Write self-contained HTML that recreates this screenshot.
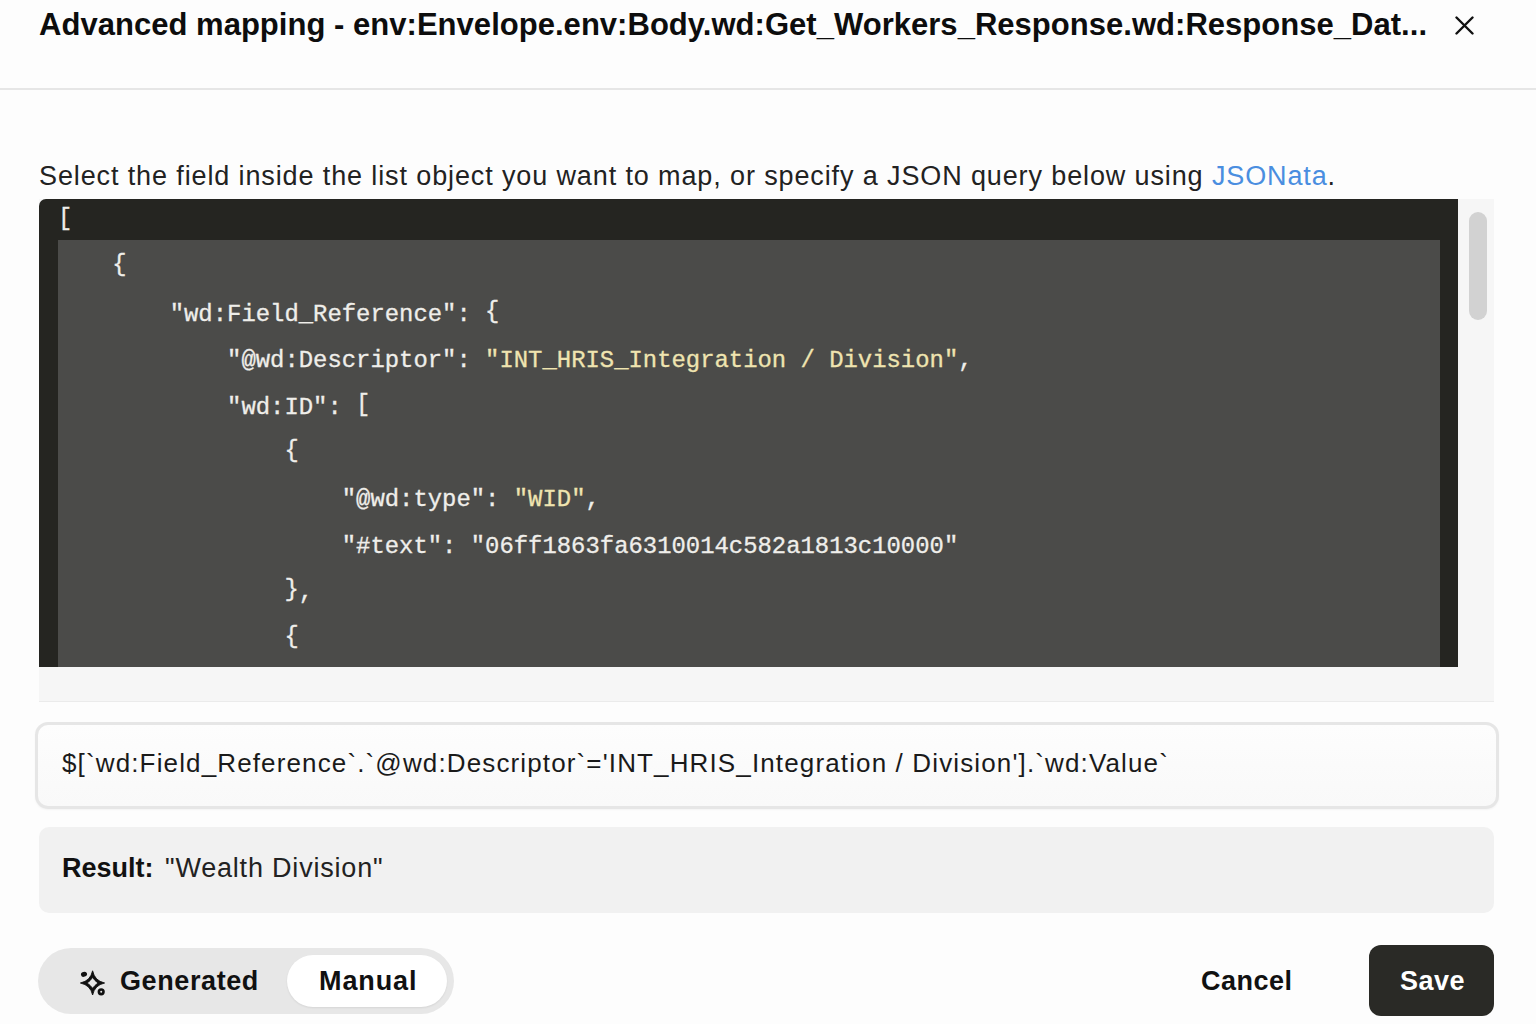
<!DOCTYPE html>
<html><head><meta charset="utf-8">
<style>
html,body{margin:0;padding:0;}
body{width:1536px;height:1024px;overflow:hidden;background:#fdfdfd;position:relative;font-family:"Liberation Sans",sans-serif;color:#111;}
.abs{position:absolute;white-space:pre;}
#title{left:39px;top:7px;font-size:31px;font-weight:bold;line-height:36px;color:#0d0d0d;letter-spacing:0.03px;}
#close{left:1455px;top:16px;width:19px;height:19px;}
#hr{left:0;top:88px;width:1536px;height:2px;background:#e6e6e6;}
#desc{left:39px;top:161px;font-size:27px;line-height:30px;color:#222;letter-spacing:0.88px;}
#desc a{color:#4a8ee0;text-decoration:none;}
#scroll{left:39px;top:199px;width:1455px;height:503px;background:#f6f6f6;border-bottom:1px solid #ebebeb;box-sizing:border-box;}
#dark{left:39px;top:199px;width:1419px;height:468px;background:#252521;border-radius:7px 0 0 0;overflow:hidden;}
#hl{left:58px;top:240px;width:1382px;height:427px;background:#4b4b49;}
#thumb{left:1469px;top:212px;width:18px;height:108px;background:#d2d2d2;border-radius:9px;}
#code{left:55px;top:199px;font-family:"Liberation Mono",monospace;font-size:23.9px;line-height:46.4px;color:#efeeea;-webkit-text-stroke:0.3px currentColor;}
.s{color:#efe4b0;}
.b{font-style:normal;position:relative;top:-3px;}
.b0{left:3px;}
#input{left:35px;top:722px;width:1464px;height:87px;box-sizing:border-box;border:3px solid #e6e6e6;border-radius:13px;background:linear-gradient(#fdfdfd,#f9f9f9);box-shadow:0 1px 2px rgba(0,0,0,0.04);}
#inptxt{left:62px;top:748px;font-size:26px;line-height:30px;color:#1a1a1a;letter-spacing:1.135px;}
#result{left:39px;top:827px;width:1455px;height:86px;background:#f1f1f1;border-radius:10px;}
#restxt{left:62px;top:853px;font-size:27px;line-height:30px;color:#222;}
#restxt b{color:#111;}
#restxt2{left:165px;top:853px;font-size:27px;line-height:30px;color:#222;letter-spacing:0.8px;}
#toggle{left:38px;top:948px;width:416px;height:66px;background:#e7e7e7;border-radius:33px;}
#manualbg{left:287px;top:955px;width:160px;height:52px;background:#fff;border-radius:26px;box-shadow:0 1px 2px rgba(0,0,0,0.08);}
#gen{left:120px;top:966px;font-size:27px;font-weight:bold;line-height:30px;color:#111;letter-spacing:0.6px;}
#man{left:319px;top:966px;font-size:27px;font-weight:bold;line-height:30px;color:#111;letter-spacing:0.9px;}
#spark{left:72px;top:962px;width:40px;height:40px;}
#cancel{left:1201px;top:966px;font-size:27px;font-weight:bold;line-height:30px;color:#111;letter-spacing:0.5px;}
#save{left:1369px;top:945px;width:125px;height:71px;background:#2a2a26;border-radius:12px;}
#savetxt{left:1400px;top:966px;font-size:27px;font-weight:bold;line-height:30px;color:#fff;letter-spacing:0.45px;}
</style></head><body>
<div id="title" class="abs">Advanced mapping - env:Envelope.env:Body.wd:Get_Workers_Response.wd:Response_Dat...</div>
<svg id="close" class="abs" viewBox="0 0 19 19"><path d="M1.5 1.5L17.5 17.5M17.5 1.5L1.5 17.5" stroke="#111" stroke-width="2.4" stroke-linecap="round"/></svg>
<div id="hr" class="abs"></div>
<div id="desc" class="abs">Select the field inside the list object you want to map, or specify a JSON query below using <a>JSONata</a>.</div>
<div id="scroll" class="abs"></div>
<div id="dark" class="abs"></div>
<div id="hl" class="abs"></div>
<div id="thumb" class="abs"></div>
<div id="code" class="abs"><i class="b b0">[</i>
    <i class="b">{</i>
        "wd:Field_Reference": <i class="b">{</i>
            "@wd:Descriptor": <span class="s">"INT_HRIS_Integration / Division"</span>,
            "wd:ID": <i class="b">[</i>
                <i class="b">{</i>
                    "@wd:type": <span class="s">"WID"</span>,
                    "#text": "06ff1863fa6310014c582a1813c10000"
                <i class="b">}</i>,
                <i class="b">{</i></div>
<div id="input" class="abs"></div>
<div id="inptxt" class="abs">$[`wd:Field_Reference`.`@wd:Descriptor`='INT_HRIS_Integration / Division'].`wd:Value`</div>
<div id="result" class="abs"></div>
<div id="restxt" class="abs"><b>Result:</b></div><div id="restxt2" class="abs">"Wealth Division"</div>
<div id="toggle" class="abs"></div>
<div id="manualbg" class="abs"></div>
<svg id="spark" class="abs" viewBox="0 0 40 40"><g transform="translate(20.6 21)"><path fill-rule="evenodd" fill="#111" stroke="#111" stroke-width="0.9" stroke-linejoin="round" d="M0 -12.2Q2.1 -2.1 12 0Q2.1 2.1 0 12Q-2.1 2.1 -12.2 0Q-2.1 -2.1 0 -12.2ZM0 -5.5Q2.2 -2.2 5.4 0Q2.2 2.2 0 5.3Q-2.2 2.2 -5.5 0Q-2.2 -2.2 0 -5.5Z"/></g><ellipse cx="12" cy="12.3" rx="3.1" ry="2.4" transform="rotate(-20 12 12.3)" fill="#111"/><circle cx="29.2" cy="29.8" r="2.3" fill="none" stroke="#111" stroke-width="2.6"/></svg>
<div id="gen" class="abs">Generated</div>
<div id="man" class="abs">Manual</div>
<div id="cancel" class="abs">Cancel</div>
<div id="save" class="abs"></div>
<div id="savetxt" class="abs">Save</div>
</body></html>
